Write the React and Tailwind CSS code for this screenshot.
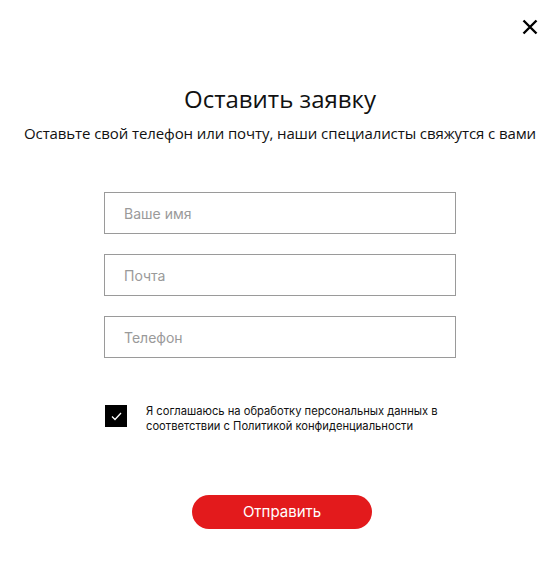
import { useState } from 'react';

const Field = ({ placeholder }) => (
  <input
    placeholder={placeholder}
    className="w-[352px] h-[42px] border border-[#9a9a9a] px-[19px] text-[14px] text-[#333] placeholder:text-[#9a9a9a] outline-none font-['Inter',sans-serif]"
  />
);

export default function App() {
  const [agree, setAgree] = useState(true);

  return (
    <div className="w-[557px] h-[572px] bg-white relative font-['Open_Sans',sans-serif]">
      {/* Close */}
      <button className="absolute right-[18px] top-[18px] w-[18px] h-[18px] flex items-center justify-center">
        <svg width="16" height="16" viewBox="0 0 16 16" fill="none" stroke="#000" strokeWidth="2.4">
          <path d="M1.5 1.5l13 13M14.5 1.5l-13 13" />
        </svg>
      </button>

      <div className="flex flex-col items-center pt-[83px] pl-[3px]">
        <h1 className="text-[24px] leading-[32px] text-[#111]">Оставить заявку</h1>
        <p className="mt-[7px] text-[15px] leading-[22px] text-[#111] tracking-[-0.1px] whitespace-nowrap">
          Оставьте свой телефон или почту, наши специалисты свяжутся с вами
        </p>

        <div className="mt-[48px] flex flex-col gap-[20px]">
          <Field placeholder="Ваше имя" />
          <Field placeholder="Почта" />
          <Field placeholder="Телефон" />
        </div>

        <div className="mt-[47px] w-[352px] flex items-start gap-[19px] pl-[1px]">
          <button
            onClick={() => setAgree(!agree)}
            className="w-[22px] h-[22px] shrink-0 bg-black flex items-center justify-center"
          >
            {agree && (
              <svg width="11" height="9" viewBox="0 0 11 9" fill="none" stroke="#fff" strokeWidth="1.3">
                <path d="M1 4.5l3 3L10 1" />
              </svg>
            )}
          </button>
          <p className="text-[11.2px] leading-[15px] text-[#111] font-['Inter',sans-serif] -mt-[1px]">
            Я соглашаюсь на обработку персональных данных в соответствии с Политикой конфиденциальности
          </p>
        </div>

        <button className="mt-[61px] ml-[4px] w-[180px] h-[34px] rounded-full bg-[#e31a1c] text-white text-[15px] font-['Inter',sans-serif]">
          Отправить
        </button>
      </div>
    </div>
  );
}
